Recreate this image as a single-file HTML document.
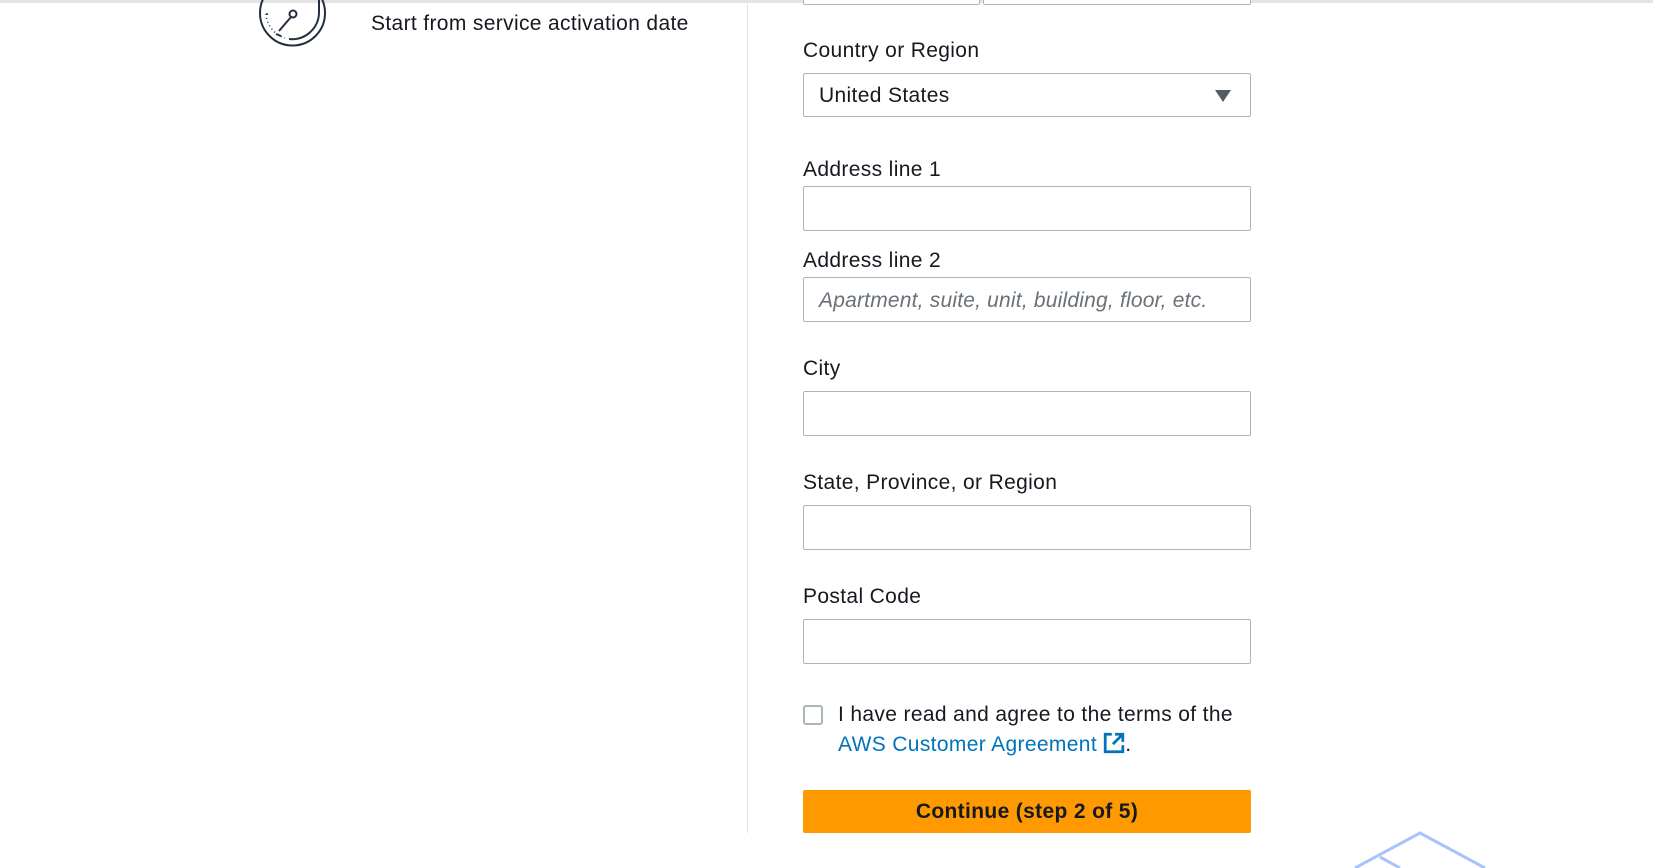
<!DOCTYPE html>
<html><head><meta charset="utf-8"><style>
*{margin:0;padding:0;box-sizing:border-box}
body{width:1653px;height:868px;background:#fff;position:relative;overflow:hidden;font-family:"Liberation Sans",sans-serif;color:#16191f;letter-spacing:0.35px}
.abs{position:absolute}
.lbl{position:absolute;left:803px;font-size:21px;line-height:24px}
.inp{position:absolute;left:803px;width:448px;height:45px;border:1px solid #aab7b8;border-radius:2px;background:#fff}
</style></head><body>
<div class="abs" style="left:0;top:0;width:1653px;height:3px;background:#e4e4e4"></div>
<div class="abs" style="left:747px;top:0;width:1px;height:833px;background:#e4e4e4"></div>
<svg class="abs" style="left:250px;top:0" width="90" height="60" viewBox="250 0 90 60">
<circle cx="292.5" cy="13" r="32.5" fill="none" stroke="#232f3e" stroke-width="2"/>
<path d="M266 14 A27 27 0 0 0 285 38" fill="none" stroke="#232f3e" stroke-width="1.5" stroke-dasharray="1 3"/>
<path d="M289 39 A27 27 0 0 0 319 13 L319 0" fill="none" stroke="#232f3e" stroke-width="2"/>
<circle cx="293" cy="14" r="3.5" fill="none" stroke="#232f3e" stroke-width="2"/>
<line x1="291" y1="17" x2="279" y2="31" stroke="#232f3e" stroke-width="2"/>
<line x1="276" y1="34" x2="281" y2="36" stroke="#232f3e" stroke-width="2"/>
<circle cx="267" cy="14" r="1" fill="#232f3e"/>
</svg>
<div class="abs" style="left:371px;top:12px;font-size:21px;line-height:24px">Start from service activation date</div>
<div class="inp" style="top:-40px;width:177px"></div>
<div class="inp" style="top:-40px;left:983px;width:268px"></div>
<div class="lbl" style="top:39px">Country or Region</div>
<div class="inp" style="top:73px;height:44px"><span class="abs" style="left:15px;top:10px;font-size:21px">United States</span>
<span class="abs" style="right:19px;top:16px;width:0;height:0;border-left:8px solid transparent;border-right:8px solid transparent;border-top:12px solid #545b64"></span></div>
<div class="lbl" style="top:158px">Address line 1</div>
<div class="inp" style="top:186px"></div>
<div class="lbl" style="top:249px">Address line 2</div>
<div class="inp" style="top:277px"><span class="abs" style="left:15px;top:11px;font-size:21px;font-style:italic;color:#687078;letter-spacing:0.2px">Apartment, suite, unit, building, floor, etc.</span></div>
<div class="lbl" style="top:357px">City</div>
<div class="inp" style="top:391px"></div>
<div class="lbl" style="top:471px">State, Province, or Region</div>
<div class="inp" style="top:505px"></div>
<div class="lbl" style="top:585px">Postal Code</div>
<div class="inp" style="top:619px"></div>
<div class="abs" style="left:803px;top:705px;width:20px;height:20px;border:2px solid #aab7b8;border-radius:3px"></div>
<div class="abs" style="left:838px;top:700px;font-size:21px;line-height:30px">I have read and agree to the terms of the<br><span style="color:#0073bb">AWS Customer Agreement <svg width="22" height="22" viewBox="0 0 20 20" style="vertical-align:-3px"><path d="M8 2H2v16h16v-6" fill="none" stroke="#0073bb" stroke-width="2.5"/><path d="M11 2h7v7M18 2l-9 9" fill="none" stroke="#0073bb" stroke-width="2.5"/></svg></span>.</div>
<div class="abs" style="left:803px;top:790px;width:448px;height:43px;background:#ff9900;border-radius:2px;font-weight:bold;font-size:21px;line-height:44px;text-align:center;color:#16191f">Continue (step 2 of 5)</div>
<svg class="abs" style="left:1300px;top:800px" width="250" height="68"><path d="M55 68 L120 33 L185 68 M80 57 L100 68" fill="none" stroke="#a9c3fb" stroke-width="3"/></svg>
</body></html>
